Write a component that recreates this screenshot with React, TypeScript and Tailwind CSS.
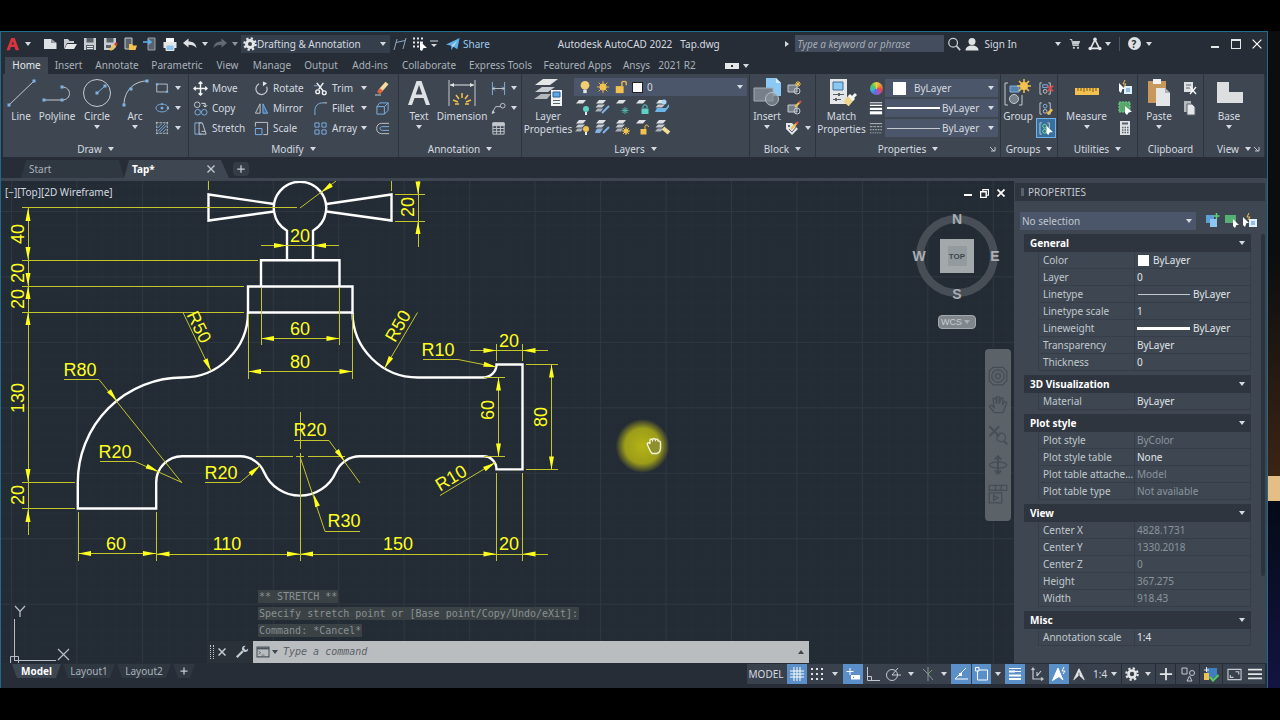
import { useState } from "react";
import type { ReactNode } from "react";

interface IconProps {
  children: ReactNode;
  className?: string;
}

const BLUE = "#7fb2e5";
const GREY = "#c3c9cf";
const GOLD = "#f2c14e";

/* ---------- small building blocks ---------- */

function Icon({ children, className = "size-4" }: IconProps) {
  return (
    <svg
      viewBox="0 0 16 16"
      fill="none"
      stroke={GREY}
      className={`shrink-0 ${className}`}
      aria-hidden="true"
    >
      {children}
    </svg>
  );
}

function BigIcon({ children }: { children: ReactNode }) {
  return (
    <svg
      viewBox="0 0 30 30"
      fill="none"
      stroke={GREY}
      className="size-[30px] shrink-0"
      aria-hidden="true"
    >
      {children}
    </svg>
  );
}

function Caret({ className = "" }: { className?: string }) {
  return (
    <svg viewBox="0 0 6 4" className={`h-1 w-1.5 shrink-0 ${className}`} aria-hidden="true">
      <path d="M0 0H6L3 4Z" fill="#d5dae0" />
    </svg>
  );
}

function IconButton({
  label,
  className = "w-5",
  children,
}: {
  label: string;
  className?: string;
  children: ReactNode;
}) {
  return (
    <button
      type="button"
      aria-label={label}
      className={`flex h-5 shrink-0 items-center justify-center ${className}`}
    >
      {children}
    </button>
  );
}

function BigButton({
  lines,
  caret = false,
  className,
  children,
}: {
  lines: string[];
  caret?: boolean;
  className: string;
  children: ReactNode;
}) {
  return (
    <button type="button" className={`flex shrink-0 flex-col items-center ${className}`}>
      <BigIcon>{children}</BigIcon>
      <span className="mt-0.5 whitespace-nowrap text-center leading-[13px]">
        {lines.map((line) => (
          <span key={line} className="block">
            {line}
          </span>
        ))}
      </span>
      {caret && <Caret className="mt-0.5" />}
    </button>
  );
}

function ToolButton({
  label,
  caret = false,
  children,
}: {
  label: string;
  caret?: boolean;
  children: ReactNode;
}) {
  return (
    <button type="button" className="flex h-5 w-full items-center gap-1 whitespace-nowrap">
      {children}
      {label}
      {caret && <Caret className="ml-auto" />}
    </button>
  );
}

function Panel({
  title,
  caret = true,
  launcher = false,
  className,
  children,
}: {
  title: string;
  caret?: boolean;
  launcher?: boolean;
  className: string;
  children: ReactNode;
}) {
  return (
    <section
      aria-label={title}
      className={`flex flex-col border-r border-[#2c343d] bg-[#3e4751] ${className}`}
    >
      <div className="flex flex-1 items-start pt-1">{children}</div>
      <div className="relative flex h-4 items-center justify-center gap-1.5 text-[#d5dae0]">
        {title}
        {caret && <Caret />}
        {launcher && (
          <svg viewBox="0 0 6 6" className="absolute right-1 size-1.5" aria-hidden="true">
            <path d="M0 1L4 5M5 1V5H1" fill="none" stroke="#c3c9cf" />
          </svg>
        )}
      </div>
    </section>
  );
}

function Combo({
  label,
  value,
  className = "",
  selectClassName = "",
  children,
}: {
  label: string;
  value: string;
  className?: string;
  selectClassName?: string;
  children?: ReactNode;
}) {
  return (
    <div className={`flex h-[18px] items-center gap-1 px-1 ${className}`}>
      {children}
      <select
        aria-label={label}
        className={`h-full min-w-0 flex-1 appearance-none bg-transparent ${selectClassName}`}
      >
        <option>{value}</option>
      </select>
      <Caret />
    </div>
  );
}

/* ---------- title bar ---------- */

function TitleBar() {
  return (
    <header className="mb-0.5 flex h-[23px] items-center text-[#d5dae0]">
      <IconButton label="Application menu" className="ml-0.5 w-5">
        <Icon className="size-3.5">
          <path d="M0.5 15L6 1H10L15 15H11L9.9 11.5H5.5L4.3 15Z M6.500 8.500H9L7.900 4.800Z" fill="#d8353f" fillRule="evenodd" stroke="none" />
        </Icon>
      </IconButton>
      <Caret className="mr-[9px] ml-0.5" />
      <IconButton label="New">
        <Icon>
          <path d="M2 3H9L14.500 7V13H2Z" fill="#dfe2e4" stroke="none" />
          <path d="M9 3L14.500 7H9Z" fill="#8f979e" stroke="none" />
        </Icon>
      </IconButton>
      <IconButton label="Open">
        <Icon>
          <path d="M2 13V3H6L7.500 5H12V7H5Z" fill="#c9cdd1" stroke="none" />
          <path d="M5 8H15L12 13H2.500Z" fill="#e4e6e8" stroke="none" />
        </Icon>
      </IconButton>
      <IconButton label="Save">
        <Icon>
          <path d="M2 2H14V14H2Z" fill="#c9cdd1" stroke="none" />
          <path d="M4.500 2H11.500V6.500H4.500ZM4 9H12V14H4Z" fill="#59626c" stroke="none" />
          <path d="M5 10.500H11M5 12.500H11" stroke="#e4e6e8" />
        </Icon>
      </IconButton>
      <IconButton label="Save as">
        <Icon>
          <path d="M2 2H14V11L11 14H2Z" fill="#c9cdd1" stroke="none" />
          <path d="M4.500 2H11.500V6.500H4.500ZM4 9H9V12H4Z" fill="#59626c" stroke="none" />
          <path d="M8 14L14 8" stroke={GOLD} strokeWidth="2.500" />
          <path d="M13 9L15 7" stroke="#d8353f" strokeWidth="2.500" />
        </Icon>
      </IconButton>
      <IconButton label="Open from web">
        <Icon>
          <path d="M3 2H10V13H3Z" fill="#59626c" stroke={GREY} />
          <path d="M7 8H10L11 9.500H15L13.500 14H7Z" fill={GOLD} stroke="none" />
        </Icon>
      </IconButton>
      <IconButton label="Save to web">
        <Icon>
          <path d="M6 2H13V14H6Z" fill="#59626c" stroke="#9aa2aa" />
          <path d="M1 6H8M6 3.500L9 6L6 8.500" stroke="#5db4f0" strokeWidth="1.500" />
        </Icon>
      </IconButton>
      <IconButton label="Plot">
        <Icon>
          <path d="M1.500 6H14.500V12H1.500Z" fill="#e4e6e8" stroke="none" />
          <path d="M4 2H12V6H4Z" fill="#f6f7f8" stroke="none" />
          <path d="M4 9H12V14.500H4Z" fill="#8cc4ee" stroke="#e4e6e8" />
        </Icon>
      </IconButton>
      <IconButton label="Undo">
        <Icon>
          <path d="M1 7L6.500 2.500V5.500C11 5.500 14 7.500 14.500 12C12.500 9.500 10 8.700 6.500 8.700V11.500Z" fill="#dfe2e4" stroke="none" />
        </Icon>
      </IconButton>
      <Caret className="mx-0.5" />
      <IconButton label="Redo">
        <Icon>
          <path d="M15 7L9.500 2.500V5.500C5 5.500 2 7.500 1.500 12C3.500 9.500 6 8.700 9.500 8.700V11.500Z" fill="#626b75" stroke="none" />
        </Icon>
      </IconButton>
      <Caret className="mr-[3px] ml-0.5 opacity-60" />
      <Combo
        label="Workspace"
        value="Drafting & Annotation"
        className="w-[149px] bg-[#353e4b]"
        selectClassName="-ml-1"
      >
        <Icon className="-ml-0.5 size-3.5">
          <circle cx="8" cy="8" r="4" strokeWidth="3.500" stroke="#e4e6e8" />
          <circle cx="8" cy="8" r="6.500" strokeWidth="2.500" strokeDasharray="2.600 2.500" stroke="#e4e6e8" />
        </Icon>
      </Combo>
      <IconButton label="Linear dimension">
        <Icon>
          <path d="M2 14L5 3M11 13L14 2M4 6.500L13 4.500" stroke="#8fa9c4" />
        </Icon>
      </IconButton>
      <IconButton label="Quick select">
        <Icon>
          <path d="M1 2.500H13M1 6.500H13M1 10.500H9" stroke="#e4e6e8" strokeWidth="1.800" strokeDasharray="2 2" />
          <path d="M8 5L15 12H11.500L10 15L8 14Z" fill="#fff" stroke="none" />
        </Icon>
      </IconButton>
      <svg viewBox="0 0 8 8" className="mr-0.5 size-2" aria-hidden="true">
        <path d="M0 1H8" stroke="#d5dae0" />
        <path d="M1 4H7L4 7Z" fill="#d5dae0" />
      </svg>
      <button type="button" className="ml-1.5 flex items-center gap-[3px] text-[#9cc9ee]">
        <Icon className="size-3.5">
          <path d="M0 8.500L15.500 1L13 14L8.500 11L6 15V10Z" fill="#5fb0ea" stroke="none" />
          <path d="M6 10L13 4L8.500 11" fill="#b5dcf8" stroke="none" />
        </Icon>
        Share
      </button>
      <div className="ml-[68px] flex gap-2 whitespace-nowrap">
        <span>Autodesk AutoCAD 2022</span>
        <span>Tap.dwg</span>
      </div>
      <div className="ml-auto flex items-center">
        <svg viewBox="0 0 4 6" className="mr-1.5 h-1.5 w-1" aria-hidden="true">
          <path d="M0 0L4 3L0 6Z" fill="#d5dae0" />
        </svg>
        <input
          type="search"
          aria-label="Search help"
          placeholder="Type a keyword or phrase"
          className="h-[17px] w-[149px] bg-[#444d5d] px-0.5 italic placeholder:text-[#a4acb6]"
        />
        <IconButton label="Search">
          <Icon className="size-3.5">
            <circle cx="7" cy="6.500" r="5" strokeWidth="1.500" />
            <path d="M11 10.500L15 15" strokeWidth="2" />
          </Icon>
        </IconButton>
        <button type="button" className="flex items-center gap-1 whitespace-nowrap">
          <Icon className="size-4">
            <circle cx="8" cy="5.500" r="3.500" fill="#dfe2e4" stroke="none" />
            <path d="M1.500 14.500C1.500 11 4.500 9.500 8 9.500S14.500 11 14.500 14.500Z" fill="#dfe2e4" stroke="none" />
          </Icon>
          Sign In
        </button>
        <Caret className="mr-1 ml-[38px]" />
        <IconButton label="App store">
          <Icon className="size-3">
            <path d="M1 2H3.500L5.500 10H13" strokeWidth="1.500" />
            <path d="M4.500 4H15L13 9H5.500Z" fill={GREY} stroke="none" />
            <circle cx="6.500" cy="13" r="1.500" fill={GREY} stroke="none" />
            <circle cx="12" cy="13" r="1.500" fill={GREY} stroke="none" />
          </Icon>
        </IconButton>
        <IconButton label="Autodesk account">
          <Icon className="size-3.5">
            <path d="M8 3L3 13H13Z" stroke="#e4e6e8" strokeWidth="1.800" />
            <circle cx="8" cy="2.500" r="2" fill="#e4e6e8" stroke="none" />
            <circle cx="2.500" cy="13" r="2" fill="#e4e6e8" stroke="none" />
            <circle cx="13.500" cy="13" r="2" fill="#e4e6e8" stroke="none" />
          </Icon>
        </IconButton>
        <Caret />
        <span className="mr-1.5 ml-2 h-3.5 w-px bg-[#4b545f]" />
        <IconButton label="Help" className="w-4">
          <span className="flex size-[13px] items-center justify-center rounded-full bg-[#dfe2e4] font-bold leading-none text-[#262d35]">
            ?
          </span>
        </IconButton>
        <Caret className="mr-[52px] ml-1" />
        <IconButton label="Minimize" className="w-[21px]">
          <span className="mt-1.5 h-0.5 w-2 bg-[#e4e6e8]" />
        </IconButton>
        <IconButton label="Maximize" className="w-[21px]">
          <span className="h-2.5 w-2.5 border border-t-2 border-[#e4e6e8]" />
        </IconButton>
        <IconButton label="Close" className="w-[21px]">
          <Icon className="size-2.5">
            <path d="M1 1L15 15M15 1L1 15" stroke="#fff" strokeWidth="2" />
          </Icon>
        </IconButton>
      </div>
    </header>
  );
}

const ribbonTabs = [
  { name: "Home", width: "w-[43px]" },
  { name: "Insert", width: "w-[41px]" },
  { name: "Annotate", width: "w-[56px]" },
  { name: "Parametric", width: "w-[64px]" },
  { name: "View", width: "w-[37px]" },
  { name: "Manage", width: "w-[52px]" },
  { name: "Output", width: "w-[46px]" },
  { name: "Add-ins", width: "w-[52px]" },
  { name: "Collaborate", width: "w-[66px]" },
  { name: "Express Tools", width: "w-[77px]" },
  { name: "Featured Apps", width: "w-[77px]" },
  { name: "Ansys", width: "w-[41px]" },
  { name: "2021 R2", width: "w-[40px]" },
];

function RibbonTabs() {
  return (
    <nav aria-label="Ribbon" className="ml-1 flex h-[17px] items-stretch text-[#a9b1ba]">
      {ribbonTabs.map((tab) => (
        <button
          key={tab.name}
          type="button"
          className={`whitespace-nowrap leading-[17px] ${tab.width} ${
            tab.name === "Home" ? "bg-[#3e4751] text-[#e4e8ec]" : ""
          }`}
        >
          {tab.name}
        </button>
      ))}
      <button type="button" aria-label="Minimize ribbon" className="ml-7 flex items-center gap-1">
        <span className="flex h-1.5 w-3.5 items-center justify-center bg-[#e4e6e8]">
          <span className="size-0.5 bg-[#262d35]" />
        </span>
        <Caret />
      </button>
    </nav>
  );
}

/* ---------- ribbon panels ---------- */

function DrawPanel() {
  return (
    <Panel title="Draw" className="w-[186px] shrink-0">
      <BigButton lines={["Line"]} className="w-9">
        <path d="M3 27L28 3" />
        <path d="M1.500 25.500H4.500V28.500H1.500ZM26.500 1.500H29.500V4.500H26.500Z" fill={BLUE} stroke="none" />
      </BigButton>
      <BigButton lines={["Polyline"]} className="w-9">
        <path d="M2 22H20C30 22 30 9 20 9" />
        <path d="M0.500 20.500H3.500V23.500H0.500ZM18.500 20.500H21.500V23.500H18.500ZM18.500 7.500H21.500V10.500H18.500Z" fill={BLUE} stroke="none" />
      </BigButton>
      <BigButton lines={["Circle"]} caret className="w-11">
        <circle cx="15" cy="15" r="13.500" />
        <path d="M15 15L23 8" stroke={BLUE} />
        <path d="M13.500 13.500H16.500V16.500H13.500ZM21.500 6.500H24.500V9.500H21.500Z" fill={BLUE} stroke="none" />
      </BigButton>
      <BigButton lines={["Arc"]} caret className="w-8">
        <path d="M4 27C4 13 14 3 27 3" />
        <path d="M2.500 25.500H5.500V28.500H2.500ZM9.500 9.500H12.500V12.500H9.500ZM25.500 1.500H28.500V4.500H25.500Z" fill={BLUE} stroke="none" />
      </BigButton>
      <div className="flex w-[30px] flex-col items-end">
        <ToolButton label="" caret>
          <Icon className="ml-1 size-3.5">
            <path d="M2 3.500H14V12.500H2Z" />
            <path d="M1 2.500H3.500V5H1ZM12.500 11H15V13.500H12.500Z" fill={BLUE} stroke="none" />
          </Icon>
        </ToolButton>
        <ToolButton label="" caret>
          <Icon className="ml-1 size-3.5">
            <ellipse cx="8" cy="8" rx="7" ry="4.500" stroke={BLUE} />
            <path d="M7 7H9V9H7ZM7.500 3H8.500V4H7.500ZM14 7H16V9H14Z" fill={BLUE} stroke={BLUE} />
          </Icon>
        </ToolButton>
        <ToolButton label="" caret>
          <Icon className="ml-1 size-3.5">
            <path d="M1 2H15M1 14H15M2 1V15M14 1V15" strokeDasharray="3 1" />
            <path d="M3 8L8 3M3 12L12 3M5 13L13 5M9 13L13 9" stroke={BLUE} />
          </Icon>
        </ToolButton>
      </div>
    </Panel>
  );
}

function ModifyPanel() {
  return (
    <Panel title="Modify" className="w-[210px] shrink-0">
      <div className="ml-1 flex w-[61px] flex-col">
        <ToolButton label="Move">
          <Icon className="size-[15px]">
            <path d="M8 1V15M1 8H15M6 3L8 1L10 3M6 13L8 15L10 13M3 6L1 8L3 10M13 6L15 8L13 10" stroke="#f0f2f4" strokeWidth="1.500" />
          </Icon>
        </ToolButton>
        <ToolButton label="Copy">
          <Icon className="size-[15px]">
            <circle cx="4.500" cy="4" r="3" />
            <circle cx="5" cy="12" r="3" stroke={BLUE} />
            <circle cx="12" cy="12" r="3" stroke={BLUE} />
            <path d="M9 2.500H13V6M11 4.500L13 6.500L15 4.500" stroke="#e4e6e8" />
          </Icon>
        </ToolButton>
        <ToolButton label="Stretch">
          <Icon className="size-[15px]">
            <path d="M9 2H2V14H9" stroke={BLUE} />
            <path d="M6.500 14V2H10L14 14ZM9 11H13" />
          </Icon>
        </ToolButton>
      </div>
      <div className="flex w-[59px] flex-col">
        <ToolButton label="Rotate">
          <Icon className="size-[15px]">
            <path d="M5.500 3A6 6 0 1 0 13.500 6" strokeWidth="1.300" />
            <path d="M9.500 0.500V5.500L14 2.500Z" fill="#e4e6e8" stroke="none" />
          </Icon>
        </ToolButton>
        <ToolButton label="Mirror">
          <Icon className="size-[15px]">
            <path d="M6.500 3V13H1.500Z" />
            <path d="M9.500 3V13H14.500Z" stroke={BLUE} fill="#3b6c9c" />
          </Icon>
        </ToolButton>
        <ToolButton label="Scale">
          <Icon className="size-[15px]">
            <path d="M1.500 6V1.500H14.500V14.500H10" />
            <path d="M1.500 8H8.500V14.500H1.500Z" stroke={BLUE} />
          </Icon>
        </ToolButton>
      </div>
      <div className="flex w-[54px] flex-col">
        <ToolButton label="Trim" caret>
          <Icon className="size-[15px]">
            <path d="M4 2L11 11M11 2L6 9" stroke="#f0f2f4" strokeWidth="1.600" />
            <circle cx="5" cy="11.500" r="2" stroke="#f0f2f4" strokeWidth="1.500" />
            <circle cx="12" cy="12.500" r="2" stroke="#f0f2f4" strokeWidth="1.500" />
            <path d="M1 5H5" stroke={BLUE} />
          </Icon>
        </ToolButton>
        <ToolButton label="Fillet" caret>
          <Icon className="size-[15px]">
            <path d="M2 15V11C2 5 5 2 11 2" stroke={BLUE} />
            <path d="M11 2H15" />
          </Icon>
        </ToolButton>
        <ToolButton label="Array" caret>
          <Icon className="size-[15px]">
            <path d="M2 2H6.500V6.500H2ZM9.500 9.500H14V14H9.500Z" stroke={BLUE} />
            <path d="M9.500 2H14V6.500H9.500ZM2 9.500H6.500V14H2Z" stroke={BLUE} />
          </Icon>
        </ToolButton>
      </div>
      <div className="flex w-[30px] flex-col items-center">
        <IconButton label="Erase">
          <Icon>
            <path d="M6 11L13 3" stroke="#f4dc9c" strokeWidth="4" />
            <path d="M4.500 13L7.500 9.500" stroke="#e0643c" strokeWidth="4" />
            <path d="M1 15H7" />
          </Icon>
        </IconButton>
        <IconButton label="Explode">
          <Icon className="size-[15px]">
            <path d="M2 6H10V14H2ZM2 6L5 2H14V10L10 14M10 6L14 2" stroke={BLUE} />
          </Icon>
        </IconButton>
        <IconButton label="Offset">
          <Icon className="size-[15px]">
            <path d="M15 2.500H7C0 2.500 0 13.500 7 13.500H15" />
            <path d="M15 6H8C4.500 6 4.500 10 8 10H15" stroke={BLUE} />
          </Icon>
        </IconButton>
      </div>
    </Panel>
  );
}

function AnnotationPanel() {
  return (
    <Panel title="Annotation" className="w-[123px] shrink-0">
      <BigButton lines={["Text"]} caret className="w-10">
        <path d="M4 27L12.500 3H17.500L26 27H22L19.500 20H10.500L8 27ZM11.700 16.500H18.300L15 7Z" fill="#dfe2e4" fillRule="evenodd" stroke="none" />
      </BigButton>
      <BigButton lines={["Dimension"]} className="w-[46px]">
        <path d="M2 2V28M28 2V28" />
        <path d="M3 7H27" stroke="#e4e6e8" />
        <path d="M3 7L7 5V9ZM27 7L23 5V9Z" fill="#e4e6e8" stroke="none" />
        <path d="M15 15V20M9 17L12 21M21 17L18 21M6 22L11 24M24 22L19 24M8 26H12M18 26H22" stroke={GOLD} strokeWidth="1.500" />
      </BigButton>
      <div className="ml-1.5 flex w-[26px] flex-col">
        <ToolButton label="" caret>
          <Icon className="size-[15px]">
            <path d="M1.500 1V15M14.500 1V15" stroke={BLUE} />
            <path d="M2 8H14M4 6L2 8L4 10M12 6L14 8L12 10" />
          </Icon>
        </ToolButton>
        <ToolButton label="" caret>
          <Icon className="size-[15px]">
            <path d="M1 13L5 6H10" />
            <circle cx="12.500" cy="5" r="2.500" />
            <path d="M1 14L1.500 10L4.500 12Z" fill={GREY} stroke="none" />
          </Icon>
        </ToolButton>
        <ToolButton label="">
          <Icon className="size-[15px]">
            <path d="M2 2H14V14H2ZM2 8H14M2 11H14M6 5V14M10 5V14" />
            <path d="M2 2H14V5H2Z" fill={GREY} />
          </Icon>
        </ToolButton>
      </div>
    </Panel>
  );
}

/* stacked sheets with a small mark in the lower right corner */
function SheetIcon({ stack, children }: { stack: boolean; children: ReactNode }) {
  return (
    <Icon>
      <path d="M5 1H12L9 4.500H2Z" fill="#dfe2e4" stroke="none" />
      {stack && (
        <>
          <path d="M4 5.500H11L8 8.500H1.500L4 5.500Z" fill="#c3c9cf" stroke="none" />
          <path d="M3.500 9.500H9L7 12.500H1Z" fill="#a9b1b9" stroke="none" />
        </>
      )}
      {children}
    </Icon>
  );
}

function LayersPanel() {
  return (
    <Panel title="Layers" className="w-[228px] shrink-0">
      <BigButton lines={["Layer", "Properties"]} className="w-[52px]">
        <path d="M10 1H25L17 7H2Z" fill="#e4e6e8" stroke="none" />
        <path d="M9 9H22L15 14H2Z" fill="#c9cdd1" stroke="none" />
        <path d="M8 16H18L14 21H1Z" fill="#b2b8be" stroke="none" />
        <path d="M18 12H29V28H18Z" fill="#f0f2f4" stroke="none" />
        <path d="M20 14H27V19H20Z" fill="#5fa8e6" stroke="#2f5f8f" />
        <path d="M20 22.500H27M20 25.500H27" stroke="#59626c" />
      </BigButton>
      <div className="flex flex-1 flex-col pr-0.5">
        <Combo label="Layer" value="0" className="bg-[#4b566a]">
          <Icon className="size-3.5">
            <circle cx="8" cy="6" r="5" fill="#f5cc6e" stroke="none" />
            <path d="M6 11H10V15H6Z" fill="#e4e6e8" stroke="none" />
          </Icon>
          <Icon className="size-3.5">
            <circle cx="8" cy="8" r="4" fill={GOLD} stroke="none" />
            <path d="M8 1V15M1 8H15M3 3L13 13M13 3L3 13" stroke={GOLD} />
          </Icon>
          <Icon className="size-3.5">
            <path d="M2 7H11V15H2Z" fill={GOLD} stroke="none" />
            <path d="M9 7V3.500C9 1 14 1 14 3.500V6" stroke={GOLD} strokeWidth="1.500" />
          </Icon>
          <span className="size-[11px] border border-[#222] bg-white" />
        </Combo>
        <div className="mt-px flex h-5 items-center gap-1">
          <SheetIcon stack={false}>
            <circle cx="12" cy="10" r="3" fill="#5fd0c4" stroke="none" />
            <path d="M12 13V16" stroke="#e4e6e8" strokeWidth="2" />
          </SheetIcon>
          <SheetIcon stack>
            <path d="M8 14L15 7" stroke={BLUE} strokeWidth="2" />
          </SheetIcon>
          <SheetIcon stack={false}>
            <path d="M11 8V15M7.500 11.500H14.500M8.500 9L13.500 14M13.500 9L8.500 14" stroke="#4fb8ac" />
          </SheetIcon>
          <SheetIcon stack={false}>
            <path d="M7.500 9.500H14.500V15H7.500Z" fill="#5fd0c4" stroke="none" />
            <path d="M9 9V7C9 5.500 13 5.500 13 7V9" stroke="#5fd0c4" />
          </SheetIcon>
          <SheetIcon stack>
            <path d="M3 9H12L15 5V8L11 13H1Z" fill="#6db4ea" stroke="none" />
            <circle cx="10" cy="3" r="2.500" fill="#a8d4f5" stroke="none" />
          </SheetIcon>
        </div>
        <div className="flex h-5 items-center gap-1">
          <SheetIcon stack>
            <circle cx="12" cy="10" r="3" fill={GOLD} stroke="none" />
            <path d="M12 13V16" stroke="#e4e6e8" strokeWidth="2" />
          </SheetIcon>
          <SheetIcon stack>
            <path d="M3 10H8L6 14H1Z" fill={BLUE} stroke="none" />
            <path d="M9 14L15 8" stroke={BLUE} strokeWidth="2" />
          </SheetIcon>
          <SheetIcon stack>
            <circle cx="12" cy="12" r="2.500" fill={GOLD} stroke="none" />
            <path d="M12 8V16M8 12H16M9 9L15 15M15 9L9 15" stroke={GOLD} />
          </SheetIcon>
          <SheetIcon stack={false}>
            <path d="M6.500 10H12.500V15.500H6.500Z" fill={GOLD} stroke="none" />
            <path d="M11 10V7.500C11 5.500 14.500 5.500 14.500 8" stroke={GOLD} />
          </SheetIcon>
          <SheetIcon stack>
            <path d="M9 9L15 14" stroke="#f4dc9c" strokeWidth="4" />
          </SheetIcon>
        </div>
      </div>
    </Panel>
  );
}

function BlockPanel() {
  return (
    <Panel title="Block" className="w-[66px] shrink-0">
      <BigButton lines={["Insert"]} caret className="w-[34px]">
        <path d="M14 0H24L29 5V18H14Z" fill="#8cc8f4" stroke="none" />
        <path d="M24 0V5H29" fill="#d4ebfb" stroke="none" />
        <path d="M2 10H21V23H2Z" fill="#76808a" stroke="#a3abb3" />
        <circle cx="20" cy="21" r="6.500" fill="#858e97" fillOpacity="0.700" stroke="#b9c0c6" />
      </BigButton>
      <div className="flex flex-1 flex-col pr-1">
        <IconButton label="Create block">
          <Icon>
            <path d="M2 5H11V12H2Z" fill="#76808a" />
            <circle cx="11" cy="11" r="3" />
            <path d="M12 1V7M9 4H15M10 2L14 6M14 2L10 6" stroke={GOLD} />
          </Icon>
        </IconButton>
        <IconButton label="Edit block">
          <Icon>
            <path d="M2 5H11V12H2Z" fill="#76808a" />
            <circle cx="11" cy="11" r="3" />
            <path d="M9 7L14 2" stroke={GOLD} strokeWidth="2" />
            <path d="M13 3L15 1" stroke="#e04848" strokeWidth="2" />
          </Icon>
        </IconButton>
        <ToolButton label="" caret>
          <Icon className="size-4">
            <path d="M2 3H8L14 9L8 15L2 9Z" fill="#e4e6e8" stroke="none" />
            <circle cx="5" cy="6" r="1" fill="#3e4751" stroke="none" />
            <path d="M7 9L13 3" stroke={GOLD} strokeWidth="2" />
            <path d="M5 9L8 12L13 6" stroke="#59626c" />
            <path d="M12 4L14 2" stroke="#e04848" strokeWidth="2" />
          </Icon>
        </ToolButton>
      </div>
    </Panel>
  );
}

function PropertiesPanel() {
  return (
    <Panel title="Properties" launcher className="w-[185px] shrink-0">
      <BigButton lines={["Match", "Properties"]} className="w-[51px]">
        <path d="M3 1H20V26H3Z" fill="#e4e6e8" stroke="none" />
        <path d="M6 4H16V12H6Z" fill="#8cc8f4" stroke="#3f6d99" />
        <path d="M6 16.500H17M6 21.500H14" stroke="#59626c" />
        <path d="M12 15V18M9 20V23" stroke="#59626c" strokeWidth="2" />
        <path d="M19 26L24 20" stroke="#f0d58c" strokeWidth="7" />
        <path d="M22 17L27 22M25 20L29 16" stroke="#f6f7f8" strokeWidth="3" />
      </BigButton>
      <div className="flex w-[18px] flex-col items-center">
        <IconButton label="Color" className="w-4">
          <span className="size-[13px] rounded-full bg-[conic-gradient(#f0d040,#e8903c,#e04848,#b050c8,#4878e0,#40b8c8,#58c858,#f0d040)]" />
        </IconButton>
        <IconButton label="Lineweight" className="w-4">
          <Icon className="size-3.5">
            <path d="M1 2H15" stroke="#fff" />
            <path d="M1 5H15" stroke="#fff" strokeWidth="1.500" />
            <path d="M1 9H15" stroke="#fff" strokeWidth="2.500" />
            <path d="M1 13.500H15" stroke="#fff" strokeWidth="3.500" />
          </Icon>
        </IconButton>
        <IconButton label="Linetype" className="w-4">
          <Icon className="size-3.5">
            <path d="M1 3H15" />
            <path d="M1 6.500H15" strokeDasharray="3 1" />
            <path d="M1 10H15" strokeDasharray="2 1" />
            <path d="M1 13.500H15" strokeDasharray="1 1" />
          </Icon>
        </IconButton>
      </div>
      <div className="flex flex-1 flex-col gap-0.5 pt-px pr-0.5">
        <Combo label="Object color" value="ByLayer" className="bg-[#4b566a]" selectClassName="pl-1">
          <span className="ml-1 size-[13px] bg-white" />
        </Combo>
        <Combo label="Object lineweight" value="ByLayer" className="bg-[#4b566a]" selectClassName="-ml-0.5">
          <span className="-ml-0.5 h-0.5 w-[53px] bg-white" />
        </Combo>
        <Combo label="Object linetype" value="ByLayer" className="bg-[#4b566a]" selectClassName="-ml-0.5">
          <span className="-ml-0.5 h-px w-[53px] bg-[#c3c9cf]" />
        </Combo>
      </div>
    </Panel>
  );
}

function GroupsPanel() {
  return (
    <Panel title="Groups" className="w-[57px] shrink-0">
      <BigButton lines={["Group"]} className="w-[34px]">
        <path d="M5 5H2V27H5M16 27H19V17" />
        <path d="M7 8H16V14H7Z" fill="#5682ac" stroke={BLUE} />
        <circle cx="11" cy="21" r="4.500" fill="#76808a" />
        <circle cx="21" cy="8" r="4" fill={GOLD} stroke="none" />
        <path d="M21 1V15M14 8H28M16 3L26 13M26 3L16 13" stroke={GOLD} strokeWidth="1.500" />
      </BigButton>
      <div className="flex flex-1 flex-col items-center">
        <IconButton label="Ungroup">
          <Icon className="size-[15px]">
            <path d="M3 2H1V14H3M10 2H12V14H10" />
            <path d="M4 4H9V7H4Z" stroke={BLUE} />
            <circle cx="6.500" cy="11" r="2" />
            <path d="M9 5L15 11M15 5L9 11" stroke="#e04848" strokeWidth="1.800" />
          </Icon>
        </IconButton>
        <IconButton label="Edit group">
          <Icon className="size-[15px]">
            <path d="M3 2H1V14H3M10 2H12V14H10" />
            <circle cx="6.500" cy="5.500" r="2" stroke={BLUE} />
            <circle cx="6.500" cy="11" r="2" />
            <path d="M9 14L14 9" stroke={GOLD} strokeWidth="2.500" />
          </Icon>
        </IconButton>
        <IconButton label="Group selection" className="w-5 border border-[#6fb1e8] bg-[#3a6f9d]">
          <Icon className="size-[15px]">
            <path d="M3 2H1V14H3M9 2H11V8" />
            <circle cx="6" cy="5.500" r="2" stroke="#6fe08f" />
            <circle cx="6" cy="11" r="2" stroke="#6fe08f" />
            <path d="M8 5L15 12H11.500L10 15L8 13Z" fill="#fff" stroke="none" />
          </Icon>
        </IconButton>
      </div>
    </Panel>
  );
}

function UtilitiesPanel() {
  return (
    <Panel title="Utilities" className="w-[80px] shrink-0">
      <BigButton lines={["Measure"]} caret className="w-[57px]">
        <path d="M3 10H27V17H3Z" fill={GOLD} stroke="none" />
        <path d="M6 10V13M9 10V13M12 10V14M15 10V13M18 10V13M21 10V14M24 10V13" stroke="#7a5a18" />
      </BigButton>
      <div className="flex flex-1 flex-col">
        <IconButton label="Quick select">
          <Icon>
            <path d="M2 3L8 9H5.500L4 13L2 11Z" fill="#fff" stroke="none" />
            <path d="M7 6H15V14H7Z" fill="#dff0fc" stroke="none" />
            <path d="M9 9H13M9 11H13" stroke="#3f8fd0" />
            <path d="M8 0L6 4H9L7 7" stroke={GOLD} />
          </Icon>
        </IconButton>
        <IconButton label="Select all">
          <Icon>
            <path d="M2 2H13V12H2Z" fill="#56a86a" stroke="#79d28f" strokeDasharray="2 1" />
            <path d="M8 6L15 12H12L10 15L8 13Z" fill="#fff" stroke="none" />
          </Icon>
        </IconButton>
        <IconButton label="Calculator">
          <Icon>
            <path d="M3 1H13V15H3Z" fill="#dfe2e4" stroke="none" />
            <path d="M5 3.500H11" stroke="#59626c" strokeWidth="2" />
            <path d="M5 7.500H12M5 10H12M5 12.500H12" stroke="#59626c" strokeWidth="1.500" strokeDasharray="1.500 1" />
          </Icon>
        </IconButton>
      </div>
    </Panel>
  );
}

function ClipboardPanel() {
  return (
    <Panel title="Clipboard" caret={false} className="w-[66px] shrink-0">
      <BigButton lines={["Paste"]} caret className="w-[42px]">
        <path d="M4 3H22V25H4Z" fill="#c8985a" stroke="none" />
        <path d="M9 1H17V6H9Z" fill="#f0f2f4" stroke="none" />
        <path d="M12 10H21L26 15V28H12Z" fill="#e4e6e8" stroke="none" />
        <path d="M21 10V15H26" fill="#a9b1b9" stroke="none" />
      </BigButton>
      <div className="flex flex-1 flex-col">
        <IconButton label="Cut">
          <Icon>
            <path d="M2 2H11V12H2Z" fill="#dfe2e4" stroke="none" />
            <path d="M4 5H9M4 8H9" stroke="#59626c" />
            <path d="M8 7L14 14M14 7L8 14" stroke="#f6f7f8" strokeWidth="1.300" />
          </Icon>
        </IconButton>
        <IconButton label="Copy to clipboard">
          <Icon>
            <path d="M2 1H9V12H2Z" fill="#b2b8be" stroke="none" />
            <path d="M5 4H10L13 7V15H5Z" fill="#e4e6e8" stroke="#59626c" />
          </Icon>
        </IconButton>
      </div>
    </Panel>
  );
}

function Ribbon() {
  return (
    <div className="mx-0.5 flex h-[83px] text-[#d5dae0]">
      <DrawPanel />
      <ModifyPanel />
      <AnnotationPanel />
      <LayersPanel />
      <BlockPanel />
      <PropertiesPanel />
      <GroupsPanel />
      <UtilitiesPanel />
      <ClipboardPanel />
      <Panel title="View" launcher className="min-w-[50px] flex-1">
        <BigButton lines={["Base"]} caret className="w-[50px]">
          <path d="M3 4H15V14H29V25H3Z" fill="#dcdee0" stroke="none" />
        </BigButton>
      </Panel>
    </div>
  );
}

function FileTabs() {
  return (
    <div className="flex h-6 items-end border-b-[3px] border-[#3e4751] pl-5">
      <button
        type="button"
        className="h-[18px] w-[103px] bg-[#2f3741] pl-2 text-left text-[#aab2bb] [clip-path:polygon(5px_0,98px_0,100%_100%,0_100%)]"
      >
        Start
      </button>
      <div className="flex h-[18px] w-[105px] items-center bg-[#3e4751] pr-3.5 pl-2 [clip-path:polygon(5px_0,97px_0,100%_100%,0_100%)]">
        <button type="button" className="flex-1 text-left font-bold text-white">
          Tap*
        </button>
        <button type="button" aria-label="Close Tap">
          <Icon className="size-2">
            <path d="M1 1L15 15M15 1L1 15" strokeWidth="2.500" />
          </Icon>
        </button>
      </div>
      <button
        type="button"
        aria-label="New drawing"
        className="mb-0.5 ml-1 flex h-3.5 w-4 items-center justify-center rounded bg-[#343c46]"
      >
        <Icon className="size-2.5">
          <path d="M8 2V14M2 8H14" strokeWidth="2" />
        </Icon>
      </button>
    </div>
  );
}

/* ---------- drawing ---------- */

interface ArrowProps {
  x: number;
  y: number;
  angle: number;
}

/* arrow head with its tip on (x, y); 0 points right, 90 points down */
function Arrow({ x, y, angle }: ArrowProps) {
  return (
    <path
      d="M0 0L-13 -2.500V2.500Z"
      transform={`translate(${x} ${y}) rotate(${angle})`}
      fill="#ffff1e"
    />
  );
}

const arrows: ArrowProps[] = [
  { x: 28, y: 208, angle: -90 },
  { x: 28, y: 260, angle: 90 },
  { x: 28, y: 286, angle: 90 },
  { x: 28, y: 286, angle: -90 },
  { x: 28, y: 312, angle: -90 },
  { x: 28, y: 482, angle: 90 },
  { x: 28, y: 509, angle: -90 },
  { x: 287, y: 245.5, angle: 0 },
  { x: 313, y: 245.5, angle: 180 },
  { x: 261, y: 338.5, angle: 180 },
  { x: 339.5, y: 338.5, angle: 0 },
  { x: 248, y: 371.5, angle: 180 },
  { x: 352.5, y: 371.5, angle: 0 },
  { x: 418, y: 194.5, angle: 90 },
  { x: 418, y: 221, angle: -90 },
  { x: 321, y: 192.5, angle: 143 },
  { x: 211, y: 371, angle: 64 },
  { x: 384.5, y: 368.5, angle: 120 },
  { x: 496.5, y: 367, angle: 12 },
  { x: 496.5, y: 350.5, angle: 0 },
  { x: 522.5, y: 350.5, angle: 180 },
  { x: 551.5, y: 364.5, angle: -90 },
  { x: 551.5, y: 469.5, angle: 90 },
  { x: 498.5, y: 377.5, angle: -90 },
  { x: 498.5, y: 456.5, angle: 90 },
  { x: 117, y: 401, angle: 52 },
  { x: 158.5, y: 471.5, angle: 24 },
  { x: 260, y: 465.5, angle: -41 },
  { x: 344.5, y: 461, angle: 54 },
  { x: 313.5, y: 494, angle: -108 },
  { x: 495.5, y: 462.5, angle: -31 },
  { x: 78, y: 553.5, angle: 180 },
  { x: 156, y: 553.5, angle: 0 },
  { x: 156.5, y: 554, angle: 180 },
  { x: 300, y: 554, angle: 0 },
  { x: 300, y: 554, angle: 180 },
  { x: 496.5, y: 554, angle: 0 },
  { x: 522.5, y: 554, angle: 180 },
];

const dimensionTexts = [
  { x: 18, y: 234, text: "40", angle: -90 },
  { x: 18, y: 273, text: "20", angle: -90 },
  { x: 18, y: 299, text: "20", angle: -90 },
  { x: 18, y: 398, text: "130", angle: -90 },
  { x: 18, y: 495, text: "20", angle: -90 },
  { x: 300, y: 236, text: "20", angle: 0 },
  { x: 300, y: 329, text: "60", angle: 0 },
  { x: 300, y: 362, text: "80", angle: 0 },
  { x: 408, y: 207, text: "20", angle: -90 },
  { x: 199, y: 327, text: "R50", angle: 64 },
  { x: 398, y: 326, text: "R50", angle: -60 },
  { x: 438, y: 350, text: "R10", angle: 0 },
  { x: 509, y: 341, text: "20", angle: 0 },
  { x: 541, y: 417, text: "80", angle: -90 },
  { x: 488, y: 410, text: "60", angle: -90 },
  { x: 80, y: 370, text: "R80", angle: 0 },
  { x: 115, y: 452, text: "R20", angle: 0 },
  { x: 221, y: 473, text: "R20", angle: 0 },
  { x: 310, y: 430, text: "R20", angle: 0 },
  { x: 344, y: 521, text: "R30", angle: 0 },
  { x: 451, y: 478, text: "R10", angle: -31 },
  { x: 116, y: 544, text: "60", angle: 0 },
  { x: 227, y: 544, text: "110", angle: 0 },
  { x: 398, y: 544, text: "150", angle: 0 },
  { x: 509, y: 544, text: "20", angle: 0 },
];

function TapDrawing() {
  return (
    <svg className="absolute inset-0 size-full" role="img" aria-label="Tap drawing with dimensions">
      <defs>
        <pattern id="minor" width="13.090" height="13.090" x="10" y="30" patternUnits="userSpaceOnUse">
          <path d="M0.500 0V13.100M0 0.500H13.100" stroke="#252d36" fill="none" />
        </pattern>
        <pattern id="major" width="65.450" height="65.450" x="10" y="30" patternUnits="userSpaceOnUse">
          <path d="M0.500 0V65.500M0 0.500H65.500" stroke="#2e3740" fill="none" />
        </pattern>
        <radialGradient id="glow">
          <stop offset="0" stopColor="#b4b414" />
          <stop offset="0.650" stopColor="#a3a318" stopOpacity="0.950" />
          <stop offset="1" stopColor="#a3a318" stopOpacity="0" />
        </radialGradient>
      </defs>
      <rect width="100%" height="100%" fill="url(#minor)" />
      <rect width="100%" height="100%" fill="url(#major)" />

      <g transform="translate(-1 -181)">
        {/* tap outline */}
        <g fill="none" stroke="#fff" strokeWidth="2.400">
          <path d="M287 260V230.700A26.200 26.200 0 1 1 313 230.700V260" />
          <path d="M274 204L208.500 194.500V220.500L274 211.500M326.500 204L391.500 194.500V220.500L326.500 211.500" />
          <path d="M261 286.500V260.200H339.500V286.500M248 312.500V286.500H352.500V312.500Z" />
          <path d="M248 312.500A65.400 65.400 0 0 1 182.600 377.500A104.800 104.800 0 0 0 77.800 482.300V508.500H156.200V482.300A26 26 0 0 1 182.200 456.300H240.100A26.200 26.200 0 0 1 264.100 472.200A39.200 39.200 0 0 0 335.900 472.200A26.200 26.200 0 0 1 359.900 456.300H483.500A13 13 0 0 1 496.500 469.400H522.500V364.500H496.500A13 13 0 0 1 483.500 377.500H417.900A65.400 65.400 0 0 1 352.500 312.500" />
        </g>

        {/* extension and dimension lines */}
        <g fill="none" stroke="#c4c52c">
          <path d="M22 207.500H297M22 260.500H258M22 286.500H244M22 312.500H244M22 482.500H75M22 508.500H75M28.500 208V535" />
          <path d="M261 245.500H339M261 338.500H339M248 371.500H352M261.500 288V345M339.500 288V345M248.500 314V379M352.500 314V379" />
          <path d="M418.500 181V247M395 194.500H425M395 221.500H425M208.500 181V190M391.500 181V191M300 208L336 181" />
          <path d="M183 312.500L211 371M417.500 312.500L384.500 368.500M423 359.500H458L496 367" />
          <path d="M470 350.500H548M496.500 344V361M522.500 344V361M551.500 364V469M526 364.500H558M526 469.500H558" />
          <path d="M498.500 377V456M484 377.500H505M484 456.500H505" />
          <path d="M64 379.500H99L182 483M100 461.500H135L182 482.500M205 482.500H240L260 465.500" />
          <path d="M294 440.500H329L360 483M360 531.500H325L300 456.500M440 495.500L495 462.500" />
          <path d="M256 456.500H293M296 456.500H304M308 456.500H345M300.500 412V449M300.500 453V561" />
          <path d="M78 553.500H156M156 554.500H548M78.500 512V561M156.500 512V561M496.500 473V561M522.500 473V561" />
        </g>
        {arrows.map((arrow, i) => (
          <Arrow key={i} {...arrow} />
        ))}

        <g fill="#ffff1e" fontFamily="'Liberation Sans', Arial, sans-serif" fontSize="18" textAnchor="middle">
          {dimensionTexts.map(({ x, y, text, angle }) => (
            <text key={`${x}-${y}`} y="6" transform={`translate(${x} ${y}) rotate(${angle})`}>
              {text}
            </text>
          ))}
        </g>

        {/* coordinate axes */}
        <g fill="none" stroke="#b5bbc1">
          <path d="M14.500 619V660.500H56M10.500 656.500H18.500V664M10.500 656.500V664M14.500 656V661" />
          <path d="M15 606L20 611.500L25 606M20 611.500V617M58 649L69 660M69 649L58 660" strokeWidth="1.300" />
        </g>

        {/* pan cursor */}
        <circle cx="642.500" cy="446" r="27" fill="url(#glow)" />
        <path
          d="M648 446C646 443 649 441.500 650 444V440.500C650 438.500 652 438.500 652.500 440C653 438 655 438 655.500 440C656.500 438.500 658 439 658.200 441C659.500 440.500 660.500 441.500 660.500 443V448C660.500 451 659 453 656.500 453.500H652C650 452 649.500 449 648 446Z"
          fill="#8f8f30"
          stroke="#f2f2d8"
          strokeWidth="1.400"
        />
      </g>
    </svg>
  );
}

function ViewCube() {
  return (
    <div className="absolute top-[30px] right-3 flex flex-col items-center">
      <svg viewBox="0 0 90 90" className="size-[90px]" role="img" aria-label="View cube">
        <circle cx="45" cy="45" r="37" fill="none" stroke="#474e56" strokeWidth="8" />
        <rect x="28" y="28" width="34" height="34" fill="#a3a9aa" />
        <rect x="36" y="35" width="19" height="20" fill="#949b9f" />
        <g fontFamily="'Liberation Sans', Arial, sans-serif" fontWeight="700" textAnchor="middle">
          <g fontSize="14" fill="#a9afb5">
            <text x="45" y="13">N</text>
            <text x="45" y="88">S</text>
            <text x="83" y="50">E</text>
            <text x="7" y="50">W</text>
          </g>
          <text x="45" y="48" fontSize="8" fill="#3f464d">TOP</text>
        </g>
      </svg>
      <button
        type="button"
        className="mt-3.5 flex h-[14px] w-[38px] items-center gap-0.5 whitespace-nowrap rounded-sm border border-[#a4a9ad] bg-[#7f868c] px-0.5 font-['Liberation_Sans',sans-serif] text-[9px] leading-[12px] text-[#c9ced2]"
      >
        WCS
        <Caret className="opacity-50" />
      </button>
    </div>
  );
}

function NavigationBar() {
  return (
    <div className="absolute top-[168px] right-[3px] flex h-[172px] w-[26px] flex-col items-center justify-around rounded-sm bg-[#5b6268] py-3">
      <Icon className="size-5">
        <path d="M4 1H12L15 4V12L12 15H4L1 12V4Z" stroke="#464d54" />
        <circle cx="8" cy="8" r="5" stroke="#464d54" />
        <circle cx="8" cy="8" r="2" stroke="#464d54" />
      </Icon>
      <Icon className="size-5">
        <path d="M5 14L1 9L3 8L5 10L4 3L6 2.500L7 7V1.500H9V7L10.500 2L12 2.500L11.500 8L13.500 5L15 6L12 14Z" stroke="#464d54" />
      </Icon>
      <Icon className="size-5">
        <path d="M1 1L9 9M9 1L1 9" stroke="#464d54" strokeWidth="1.500" />
        <circle cx="10.500" cy="10" r="3.500" stroke="#464d54" />
        <path d="M13 13L15.500 15.500" stroke="#464d54" strokeWidth="1.500" />
      </Icon>
      <Icon className="size-5">
        <path d="M8 1V15M5.500 3.500L8 1L10.500 3.500M5.500 12.500L8 15L10.500 12.500" stroke="#464d54" strokeWidth="1.500" />
        <ellipse cx="8" cy="8" rx="7" ry="2.500" stroke="#464d54" />
      </Icon>
      <Icon className="size-5">
        <path d="M1 1H15V5H1ZM6 1V5M10.500 1V5M1 7H11V15H1ZM4.500 9V13L8 11Z" stroke="#464d54" />
      </Icon>
    </div>
  );
}

const history = [
  "** STRETCH **",
  "Specify stretch point or [Base point/Copy/Undo/eXit]:",
  "Command: *Cancel*",
];

function CommandLine() {
  const [command, setCommand] = useState("");

  return (
    <div className="absolute bottom-0 left-[206px] w-[602px] font-['DejaVu_Sans_Mono',monospace]">
      <ul className="mb-1 flex flex-col items-start gap-1 pl-[51px] leading-[13px] text-[#8a9093]">
        {history.map((line) => (
          <li key={line} className="whitespace-pre bg-[#3a4245] px-px">
            {line}
          </li>
        ))}
      </ul>
      <div className="flex h-[22px] items-center bg-[#2a3139]">
        <span className="ml-[3px] h-3.5 w-1 border-x border-dotted border-[#c3c9cf]" />
        <IconButton label="Close command line" className="w-4">
          <Icon className="size-2">
            <path d="M1 1L15 15M15 1L1 15" strokeWidth="3" />
          </Icon>
        </IconButton>
        <IconButton label="Customize" className="mr-0.5 ml-[3px] w-[18px]">
          <Icon className="size-3.5">
            <path d="M2 14L9 7" strokeWidth="2.500" />
            <path d="M15 4L12.500 6L10 3.500L12 1C9 0.500 7.500 3 8 5.500L10.500 8C13 8.500 15.500 7 15 4Z" fill={GREY} stroke="none" />
          </Icon>
        </IconButton>
        <div className="flex h-[22px] flex-1 items-center bg-[#babdbf] px-[3px]">
          <Icon className="h-3 w-[14px]">
            <path d="M0 1.500H16V14.500H0Z" stroke="#4d555c" strokeWidth="1.500" />
            <path d="M0 3.500H16" stroke="#4d555c" strokeWidth="2" />
            <path d="M2 7L5 9L2 11M6 12H10" stroke="#4d555c" />
          </Icon>
          <svg viewBox="0 0 6 4" className="mx-0.5 h-1 w-1.5" aria-hidden="true">
            <path d="M0 0H6L3 4Z" fill="#3f464d" />
          </svg>
          <input
            type="text"
            aria-label="Command"
            placeholder="Type a command"
            value={command}
            onChange={(e) => setCommand(e.target.value)}
            className="min-w-0 flex-1 bg-transparent px-[3px] italic text-[#2b3138] placeholder:text-[#5b6167]"
          />
          <svg viewBox="0 0 6 4" className="mr-0.5 h-1 w-1.5" aria-hidden="true">
            <path d="M0 4H6L3 0Z" fill="#3f464d" />
          </svg>
        </div>
      </div>
    </div>
  );
}

function DrawingArea() {
  return (
    <main className="relative min-w-0 flex-1 overflow-hidden bg-[#232b34]">
      <TapDrawing />
      <div className="absolute top-1 left-1 leading-[14px] text-[#d5dae0]">
        [−][Top][2D Wireframe]
      </div>
      <div className="absolute top-[7px] right-[9px] flex h-2.5 items-center gap-2">
        <button type="button" aria-label="Minimize drawing" className="mt-1 h-0.5 w-2 bg-white" />
        <button type="button" aria-label="Restore drawing">
          <Icon className="size-[9px]">
            <path d="M5 4V1H15V11H12" stroke="#fff" strokeWidth="2" />
            <path d="M1 5H11V15H1Z" stroke="#fff" strokeWidth="2.500" />
          </Icon>
        </button>
        <button type="button" aria-label="Close drawing">
          <Icon className="size-2">
            <path d="M1 1L15 15M15 1L1 15" stroke="#fff" strokeWidth="3.500" />
          </Icon>
        </button>
      </div>
      <ViewCube />
      <NavigationBar />
      <CommandLine />
    </main>
  );
}

/* ---------- properties palette ---------- */

interface Row {
  name: string;
  value: string;
  muted?: boolean;
  mark?: "swatch" | "thin" | "thick";
}

const sections: { title: string; rows: Row[] }[] = [
  {
    title: "General",
    rows: [
      { name: "Color", value: "ByLayer", mark: "swatch" },
      { name: "Layer", value: "0" },
      { name: "Linetype", value: "ByLayer", mark: "thin" },
      { name: "Linetype scale", value: "1" },
      { name: "Lineweight", value: "ByLayer", mark: "thick" },
      { name: "Transparency", value: "ByLayer" },
      { name: "Thickness", value: "0" },
    ],
  },
  { title: "3D Visualization", rows: [{ name: "Material", value: "ByLayer" }] },
  {
    title: "Plot style",
    rows: [
      { name: "Plot style", value: "ByColor", muted: true },
      { name: "Plot style table", value: "None" },
      { name: "Plot table attache...", value: "Model", muted: true },
      { name: "Plot table type", value: "Not available", muted: true },
    ],
  },
  {
    title: "View",
    rows: [
      { name: "Center X", value: "4828.1731", muted: true },
      { name: "Center Y", value: "1330.2018", muted: true },
      { name: "Center Z", value: "0", muted: true },
      { name: "Height", value: "367.275", muted: true },
      { name: "Width", value: "918.43", muted: true },
    ],
  },
  { title: "Misc", rows: [{ name: "Annotation scale", value: "1:4" }] },
];

const marks = {
  swatch: "mr-1 ml-px size-[11px] bg-white",
  thin: "mr-[3px] ml-px h-px w-[52px] bg-[#c3c9cf]",
  thick: "mr-[3px] h-[3px] w-[53px] bg-white",
};

function PropertiesPalette() {
  return (
    <aside className="flex w-[253px] shrink-0 flex-col bg-[#3e4751] pt-0.5 pr-0.5 pl-px text-[#c0c7ce]">
      <h2 className="flex h-[18px] items-center gap-1 bg-[#2f353f] pl-1.5">
        <span className="h-2 w-[3px] bg-[#59626c]" />
        PROPERTIES
      </h2>
      <div className="mt-[10px] flex items-center pr-px pl-[5px]">
        <Combo
          label="Selection"
          value="No selection"
          className="mr-1.5 min-w-0 flex-1 bg-[#4b566a]"
          selectClassName="-ml-0.5"
        />
        <IconButton label="Toggle PICKADD">
          <Icon>
            <path d="M2 2H10V10H2Z" fill="#5f9fd8" stroke="none" />
            <path d="M6 6H13V14H6Z" fill="#8cc8f4" stroke="none" />
            <path d="M12.500 0V6M9.500 3H15.500" stroke="#5fd07f" strokeWidth="1.500" />
          </Icon>
        </IconButton>
        <IconButton label="Select objects">
          <Icon>
            <path d="M1 2H12V10H1Z" fill="#56b074" stroke="none" />
            <path d="M9 6L15 12H12.500L11 15L9 13Z" fill="#fff" stroke="none" />
          </Icon>
        </IconButton>
        <IconButton label="Quick select" className="mr-1.5 w-4">
          <Icon>
            <path d="M1 4L7 10H4.500L3 14L1 12Z" fill="#fff" stroke="none" />
            <path d="M7 6H15V14H7Z" fill="#dff0fc" stroke="none" />
            <path d="M9 9H13M9 11H13" stroke="#3f8fd0" />
            <path d="M7 0L5 4H8L6 7" stroke={GOLD} />
          </Icon>
        </IconButton>
      </div>
      <div className="mt-[3px] flex flex-1">
        <div className="flex flex-1 flex-col gap-1 pl-[9px]">
          {sections.map((section) => (
            <section key={section.title} aria-label={section.title}>
              <h3 className="flex h-[18px] items-center justify-between bg-[#2f353f] px-1.5 font-bold text-white">
                {section.title}
                <Caret />
              </h3>
              <div className="pl-3.5">
                <table className="w-full table-fixed border-separate border-spacing-0 border-x border-[#353e48]">
                  <tbody>
                    {section.rows.map((row) => (
                      <tr key={row.name}>
                        <th
                          scope="row"
                          className="h-[17px] w-24 border-r border-b border-[#353e48] p-0 pl-1 text-left leading-4 font-normal whitespace-nowrap"
                        >
                          {row.name}
                        </th>
                        <td
                          className={`h-[17px] border-b border-[#353e48] p-0 pl-0.5 leading-4 ${
                            row.muted ? "text-[#8b949e]" : "text-[#e0e5ea]"
                          }`}
                        >
                          <div className="flex h-4 items-center">
                            {row.mark && <span className={marks[row.mark]} />}
                            {row.value}
                          </div>
                        </td>
                      </tr>
                    ))}
                  </tbody>
                </table>
              </div>
            </section>
          ))}
        </div>
        <div className="ml-2.5 h-[342px] w-1 rounded-sm bg-[#2c343d]" />
      </div>
    </aside>
  );
}

/* ---------- status bar ---------- */

function StatusBar() {
  const on = "bg-[#5b8fc7]";
  const layoutTab = "h-3.5 leading-[13px] [clip-path:polygon(0_0,100%_0,calc(100%-5px)_100%,5px_100%)]";

  return (
    <footer className="flex h-[25px] items-start text-[#d5dae0]">
      <nav aria-label="Layouts" className="flex gap-0.5 pt-px pl-[11px]">
        <button type="button" className={`w-[49px] bg-[#3e4751] font-bold text-white ${layoutTab}`}>
          Model
        </button>
        <button type="button" className={`w-[52px] bg-[#2f3741] text-[#aab2bb] ${layoutTab}`}>
          Layout1
        </button>
        <button type="button" className={`w-[54px] bg-[#2f3741] text-[#aab2bb] ${layoutTab}`}>
          Layout2
        </button>
        <button type="button" aria-label="New layout" className={`flex w-[22px] items-center justify-center bg-[#2f3741] ${layoutTab}`}>
          <Icon className="size-2">
            <path d="M8 1V15M1 8H15" strokeWidth="2.500" />
          </Icon>
        </button>
      </nav>
      <div className="mt-px mr-0.5 ml-auto flex h-5 bg-[#39414c]">
        <button type="button" className="mr-0.5 w-[38px]">MODEL</button>
        <IconButton label="Grid" className={`w-5 ${on}`}>
          <Icon>
            <path d="M5 1V15M8 1V15M11 1V15M1 5H15M1 8H15M1 11H15" stroke="#fff" />
          </Icon>
        </IconButton>
        <IconButton label="Snap mode">
          <Icon>
            <path d="M2 3H15M2 8H15M2 13H15" stroke="#dfe2e4" strokeWidth="2" strokeDasharray="2 3" />
          </Icon>
        </IconButton>
        <IconButton label="Snap options" className="w-4"><Caret /></IconButton>
        <IconButton label="Dynamic input" className={`w-5 ${on}`}>
          <Icon>
            <path d="M5 2V9M1.500 5.500H8.500" stroke="#fff" />
            <path d="M6 9H15V13.500H6Z" fill="#fff" stroke="none" />
            <path d="M8 11.300H9" stroke="#3b6c9c" />
          </Icon>
        </IconButton>
        <IconButton label="Ortho mode">
          <Icon>
            <path d="M2.500 1V14.500H15M2.500 10.500H6.500V14.500" />
          </Icon>
        </IconButton>
        <IconButton label="Polar tracking">
          <Icon>
            <circle cx="7" cy="9" r="5.500" />
            <path d="M7 9L13 2M7 9H16" />
          </Icon>
        </IconButton>
        <IconButton label="Polar options" className="w-4"><Caret /></IconButton>
        <IconButton label="Isometric drafting" className="w-[18px]">
          <Icon>
            <path d="M8 1V15M3 3L8 8L13 14" stroke="#8b949e" />
            <path d="M8 8L12 4" stroke="#6ea56e" />
          </Icon>
        </IconButton>
        <IconButton label="Isometric options" className="w-3.5"><Caret /></IconButton>
        <IconButton label="Object snap tracking" className={`w-5 ${on}`}>
          <Icon>
            <path d="M13 2L2 13H15" stroke="#fff" />
            <path d="M6 7H9V10H6Z" fill="#fff" stroke="none" />
          </Icon>
        </IconButton>
        <IconButton label="Object snap" className={`w-5 border-l border-[#39414c] ${on}`}>
          <Icon>
            <path d="M4 4H13.500V14H3.500V4" stroke="#fff" />
            <path d="M1.500 1.500H5V5H1.500Z" fill="#5b8fc7" stroke="#fff" />
          </Icon>
        </IconButton>
        <IconButton label="Snap settings" className="w-3.5"><Caret /></IconButton>
        <IconButton label="Lineweight display" className={`w-5 ${on}`}>
          <Icon>
            <path d="M2 2.500H14" stroke="#fff" />
            <path d="M2 5.500H8M2 9.500H14M2 13H14" stroke="#fff" strokeWidth="2" />
            <path d="M8 5.500H14" stroke="#fff" />
          </Icon>
        </IconButton>
        <IconButton label="Dynamic UCS" className="w-6">
          <Icon>
            <path d="M4 2V13H14M2.500 4L4 2L5.500 4M12 11.500L14 13L12 14.500M8 10L12 5M8 6V10" strokeWidth="1.200" />
          </Icon>
        </IconButton>
        <IconButton label="Annotation visibility" className={`w-5 ${on}`}>
          <Icon>
            <path d="M1.500 14.500L7 2L9 7L12 14L8 10.500Z" fill="#fff" stroke="#fff" />
            <path d="M13 1L11 5H14L12 8" stroke="#fff" />
          </Icon>
        </IconButton>
        <IconButton label="Auto scale">
          <Icon className="size-3.5">
            <path d="M2 14.500L8 2L14 14.500L9 10V6H7V10Z" fill="#e4e6e8" stroke="#e4e6e8" />
          </Icon>
        </IconButton>
        <button type="button" className="flex w-8 items-center gap-1 pl-1">
          1:4 <Caret />
        </button>
        <IconButton label="Workspace switching" className="w-5 border-l border-[#262d37]">
          <Icon className="size-3.5">
            <circle cx="8" cy="8" r="4" strokeWidth="3" stroke="#e4e6e8" />
            <circle cx="8" cy="8" r="6.500" strokeWidth="2.500" strokeDasharray="2.600 2.500" stroke="#e4e6e8" />
          </Icon>
        </IconButton>
        <IconButton label="Workspace options" className="w-3.5"><Caret /></IconButton>
        <IconButton label="Annotation monitor" className="w-5 border-l border-[#262d37]">
          <Icon className="size-3.5">
            <path d="M8 1V15M1 8H15" strokeWidth="2" stroke="#e4e6e8" />
          </Icon>
        </IconButton>
        <IconButton label="Isolate objects" className="w-6 border-l border-[#262d37]">
          <Icon>
            <path d="M2 2H7V8H2ZM10 15L7 15L9.500 10L12 15Z" />
            <circle cx="12" cy="7" r="2.500" />
          </Icon>
        </IconButton>
        <IconButton label="Hardware acceleration" className="w-6 border-x border-[#262d37]">
          <Icon>
            <path d="M4 2H14V9L9 13H4Z" fill="#3f7fc0" stroke="none" />
            <path d="M1 7H6V14H1Z" fill={GOLD} stroke="none" />
            <path d="M1 4H6M3.500 1V6" stroke="#e4e6e8" />
            <path d="M7 11L10 14.500L15.500 9" stroke="#58c868" strokeWidth="2.200" />
          </Icon>
        </IconButton>
        <IconButton label="Clean screen" className="w-[22px]">
          <Icon className="size-[15px]">
            <path d="M1 2.500H15V13.500H1ZM9 5H12.500V8M3.500 8.500V11H7" strokeWidth="1.200" />
          </Icon>
        </IconButton>
        <IconButton label="Customization">
          <Icon className="size-3.5">
            <path d="M0 3H16M0 8H16M0 13H16" strokeWidth="2" stroke="#e4e6e8" />
          </Icon>
        </IconButton>
      </div>
    </footer>
  );
}

export default function App() {
  return (
    <div className="flex h-screen flex-col bg-black pt-[31px] pb-8 font-['Noto_Sans','Open_Sans',sans-serif] text-[10px] leading-[14px]">
      <div className="flex min-h-0 flex-1">
        <div className="flex min-w-0 flex-1 flex-col border-x border-t border-[#226a8c] bg-[#262d36]">
          <TitleBar />
          <RibbonTabs />
          <Ribbon />
          <FileTabs />
          <div className="flex min-h-0 flex-1">
            <DrawingArea />
            <PropertiesPalette />
          </div>
          <StatusBar />
        </div>
        {/* desktop behind the window */}
        <div className="flex w-3 shrink-0 flex-col">
          <div className="flex-[445] bg-gradient-to-b from-[#0c0d0f] from-50% to-[#3b2413]" />
          <div className="flex-[25] bg-[#e3bf86]" />
          <div className="flex-[187] bg-gradient-to-b from-[#050a18] to-[#131440]" />
        </div>
      </div>
    </div>
  );
}
